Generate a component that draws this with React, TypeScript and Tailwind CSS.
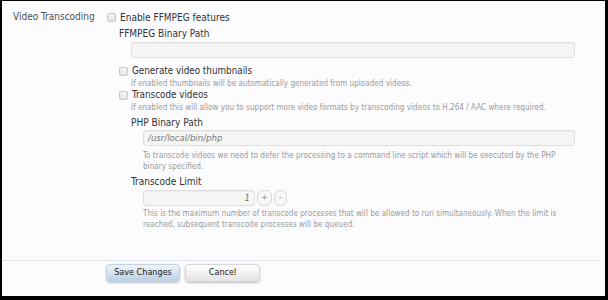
import React from 'react';

const font = { fontFamily: '"DejaVu Sans Condensed", "DejaVu Sans", sans-serif' };

const Check = () => (
  <span className="inline-block w-[9px] h-[9px] rounded-[2px] border border-[#c9c9c9] bg-gradient-to-b from-[#f4f4f4] to-[#e2e2e2] shrink-0" />
);

const Hint = ({ children, className = '' }: { children: React.ReactNode; className?: string }) => (
  <p className={`text-[8.1px] leading-[11px] text-[#9a9a9a] ${className}`}>{children}</p>
);

const TextInput = ({ value, className = '' }: { value?: string; className?: string }) => (
  <div
    className={`h-[16px] rounded-[3px] border border-[#dedede] bg-[#f6f6f4] shadow-[inset_0_1px_1px_rgba(0,0,0,0.04)] flex items-center px-[4px] text-[9.5px] italic text-[#777] ${className}`}
  >
    {value}
  </div>
);

export default function App() {
  return (
    <div className="w-[608px] h-[300px] bg-black pt-[1px] pl-[2px]" style={font}>
      <div className="w-[603px] h-[295px] bg-[#fcfcfe] flex flex-col">
        <div className="flex mt-[8px]">
          <div className="w-[105px] pl-[11px] h-[16px] leading-[16px] text-[10px] text-[#505050]">Video Transcoding</div>
          <div className="flex-1 flex flex-col">
            <div className="h-[16px] flex items-center gap-[4px] text-[10px] text-[#333]">
              <Check />
              <span>Enable FFMPEG features</span>
            </div>
            <div className="pl-[12px] flex flex-col">
              <div className="mt-[2px] h-[14px] leading-[14px] text-[10px] text-[#333]">FFMPEG Binary Path</div>
              <TextInput className="mt-[1px] ml-[12px] w-[444px]" />

              <div className="mt-[7px] h-[12px] flex items-center gap-[4px] text-[9.8px] text-[#333]">
                <Check />
                <span>Generate video thumbnails</span>
              </div>
              <Hint className="ml-[12px] mt-[1px]">If enabled thumbnails will be automatically generated from uploaded videos.</Hint>
              <div className="h-[12px] flex items-center gap-[4px] text-[9.8px] text-[#333]">
                <Check />
                <span>Transcode videos</span>
              </div>
              <Hint className="ml-[12px] mt-[1px]">
                If enabled this will allow you to support more video formats by transcoding videos to H.264 / AAC where required.
              </Hint>

              <div className="pl-[12px] flex flex-col">
                <div className="mt-[3px] h-[14px] leading-[14px] text-[10px] text-[#333]">PHP Binary Path</div>
                <TextInput value="/usr/local/bin/php" className="ml-[12px] w-[432px]" />
                <Hint className="ml-[12px] mt-[4px] w-[420px]">
                  To transcode videos we need to defer the processing to a command line script which will be executed by the PHP binary specified.
                </Hint>
                <div className="mt-[3px] h-[14px] leading-[14px] text-[10px] text-[#333]">Transcode Limit</div>
                <div className="ml-[12px] mt-[1px] flex items-center gap-[2px]">
                  <TextInput value="1" className="w-[112px] justify-end" />
                  <span className="w-[15px] h-[16px] rounded-[6px] border border-[#d6d6d6] bg-[#f7f7f7] flex items-center justify-center text-[9px] text-[#999]">+</span>
                  <span className="w-[13px] h-[16px] rounded-[6px] border border-[#d6d6d6] bg-[#f7f7f7] flex items-center justify-center text-[9px] text-[#999]">-</span>
                </div>
                <Hint className="ml-[12px] mt-[2px] w-[420px]">
                  This is the maximum number of transcode processes that will be allowed to run simultaneously. When the limit is reached, subsequent transcode processes will be queued.
                </Hint>
              </div>
            </div>
          </div>
        </div>

        <div className="mt-auto mb-[14px] border-t border-[#e2e8ef] w-[598px]">
          <div className="flex gap-[5px] pl-[104px] mt-[3px]">
            <button className="w-[74px] h-[18px] rounded-[4px] bg-gradient-to-b from-[#eef4fa] to-[#b9d0e5] border border-[#c3d3e2] shadow-[0_1px_2px_rgba(0,0,0,0.25)] text-[9px] text-[#222]">
              Save Changes
            </button>
            <button className="w-[75px] h-[18px] rounded-[4px] bg-gradient-to-b from-[#ffffff] to-[#e3e3e6] border border-[#d8d8dc] shadow-[0_1px_2px_rgba(0,0,0,0.25)] text-[9px] text-[#222]">
              Cancel
            </button>
          </div>
        </div>
      </div>
    </div>
  );
}
